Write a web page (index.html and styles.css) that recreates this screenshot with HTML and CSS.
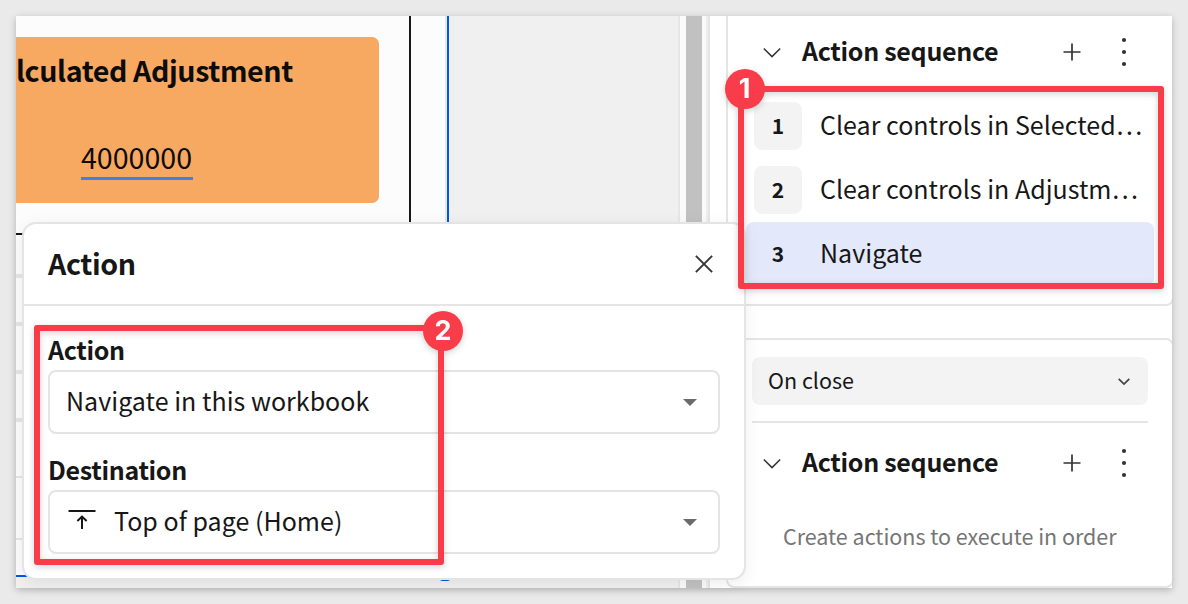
FILE: index.html
```html
<!DOCTYPE html>
<html lang="en">
<head>
<meta charset="utf-8">
<title>Action sequence</title>
<link rel="stylesheet" href="styles.css">
</head>
<body>
<main class="window">
  <section class="canvas">
    <div class="page">
      <div class="page-top">
        <div class="kpi">
          <div class="kpi-title">lculated Adjustment</div>
          <div class="kpi-value"><span class="t-value">4000000</span></div>
        </div>
      </div>
      <div class="rows">
        <i class="row-line"></i><i class="row-line"></i><i class="row-line"></i><i class="row-line"></i>
        <i class="row-line thin first"></i><i class="row-line thin"></i>
      </div>
    </div>
    <div class="gutter"></div>
    <div class="scrollbar"><div class="thumb"></div></div>
    <span class="handle"></span>
  </section>

  <aside class="sidebar">
    <div class="card card-open">
      <header class="seq-head">
        <svg class="chev" viewBox="0 0 20 12"><path d="M1.8 2.5 10 10.6 18.2 2.5"/></svg>
        <h2 class="seq-title">Action sequence</h2>
        <svg class="plus" viewBox="0 0 18 18"><path d="M9 .5v17M.5 9h17"/></svg>
        <svg class="dots" viewBox="0 0 6 30"><circle cx="3" cy="3" r="2.1"/><circle cx="3" cy="15" r="2.1"/><circle cx="3" cy="27" r="2.1"/></svg>
      </header>
      <ol class="steps">
        <li class="step"><b class="num">1</b><span class="step-text">Clear controls in Selected…</span></li>
        <li class="step"><b class="num">2</b><span class="step-text">Clear controls in Adjustm…</span></li>
        <li class="step active"><b class="num">3</b><span class="step-text">Navigate</span></li>
      </ol>
    </div>
    <div class="card card-close">
      <div class="trigger"><span>On close</span><svg class="chev-sm" viewBox="0 0 14 10"><path d="M1.7 2.8 7 8 12.3 2.8"/></svg></div>
      <hr class="rule">
      <header class="seq-head second">
        <svg class="chev" viewBox="0 0 20 12"><path d="M1.8 2.5 10 10.6 18.2 2.5"/></svg>
        <h2 class="seq-title">Action sequence</h2>
        <svg class="plus" viewBox="0 0 18 18"><path d="M9 .5v17M.5 9h17"/></svg>
        <svg class="dots" viewBox="0 0 6 30"><circle cx="3" cy="3" r="2.1"/><circle cx="3" cy="15" r="2.1"/><circle cx="3" cy="27" r="2.1"/></svg>
      </header>
      <p class="empty">Create actions to execute in order</p>
    </div>
  </aside>

  <section class="popover">
    <header class="pop-head">
      <h1 class="pop-title">Action</h1>
      <svg class="close" viewBox="0 0 18 18"><path d="M.9.9l16.2 16.2M17.1.9.9 17.1"/></svg>
    </header>
    <div class="fields">
      <div class="label">Action</div>
      <div class="select"><span class="value">Navigate in this workbook</span><svg class="caret" viewBox="0 0 14 7"><path d="M0 0h14L7 7z"/></svg></div>
      <div class="label">Destination</div>
      <div class="select">
        <svg class="top-icon" viewBox="0 0 28 20"><path d="M.5 2h27M14 7.4V20M9.4 12 14 7.6l4.6 4.4"/></svg>
        <span class="value">Top of page (Home)</span>
        <svg class="caret" viewBox="0 0 14 7"><path d="M0 0h14L7 7z"/></svg>
      </div>
    </div>
  </section>
</main>
<div class="mark mark-1"><span class="badge">1</span></div>
<div class="mark mark-2"><span class="badge">2</span></div>
</body>
</html>
```
FILE: styles.css
```css
* { box-sizing: border-box; }
body {
  margin: 0; padding: 16px; width: 1188px; height: 604px; overflow: hidden;
  position: relative; background: #eaeaea; color: #171717;
  font-family: "Noto Sans CJK SC", "Noto Sans", sans-serif;
}
h1, h2, p, ol { margin: 0; padding: 0; }
svg { display: block; fill: none; flex: none; }
span { white-space: nowrap; }

.window {
  position: relative; display: flex; width: 1156px; height: 572px;
  background: #fff; box-shadow: 0 2px 7px rgba(0,0,0,.24);
}
.canvas { position: relative; display: flex; width: 694px; height: 572px; background: #f0f0f0; }
.page {
  width: 433px; height: 561px; background: #fcfcfc; overflow: hidden;
  border-right: 2px solid #0058e6; border-bottom: 2px solid #0058e6;
  box-shadow: inset -2px 0 #e8e8e8;
}
.page-top {
  width: 395px; height: 219px; padding-top: 21px;
  border-right: 2px solid #171717; border-bottom: 2px solid #171717;
}
.kpi { width: 363px; height: 166px; background: #f7a861; border-radius: 0 7px 7px 0; color: #0c0c0c; }
.kpi-title { height: 66px; font-size: 28.6px; font-weight: 700; line-height: 66px; letter-spacing: -.4px; }
.kpi-value { display: flex; height: 77px; padding-left: 65px; align-items: flex-end; font-size: 28.6px; }
.t-value { width: 112px; height: 46px; line-height: 46px; border-bottom: 3px solid #3e7fe8; }
.rows { display: flex; flex-direction: column; gap: 44px; padding-top: 39px; }
.row-line { height: 4px; background: #e5e5e5; }
.row-line.thin { height: 2px; margin-top: 16px; }
.row-line.first { margin-top: 10px; }
.gutter { flex: 1; }
.scrollbar {
  width: 32px; background: #fafafa; border-left: 2px solid #e6e6e6;
  border-right: 2px solid #e5e5e5; padding-left: 6px;
  box-shadow: inset -2px 0 #eee;
}
.thumb { width: 16px; height: 100%; background: #c1c1c1; }
.handle { position: absolute; left: 423px; top: 553px; width: 12px; height: 12px; border-radius: 4px; background: #0058e6; }

.sidebar { flex: 1; padding-left: 16px; overflow: hidden; }
.card { width: 448px; border: 2px solid #e5e5e5; background: #fff; }
.card-open { height: 290px; border-top: 0; border-radius: 0 0 8px 8px; }
.card-close { height: 250px; margin-top: 32px; border-radius: 8px; padding: 17px 0 0 24px; }
.seq-head { display: flex; align-items: center; height: 72px; padding-left: 34px; color: #171717; }
.seq-title { width: 198px; margin-left: 20px; padding-bottom: 4px; font-size: 25px; line-height: 36px; font-weight: 700; letter-spacing: -.3px; white-space: nowrap; }
.chev { width: 20px; height: 12px; stroke: #333; stroke-width: 1.5; }
.plus { width: 18px; height: 18px; margin-left: 63px; stroke: #333; stroke-width: 1.7; }
.dots { width: 6px; height: 30px; margin-left: 40px; fill: #333; }
.steps { list-style: none; padding: 6px 0 0 18px; }
.step { display: flex; align-items: center; width: 408px; height: 64px; padding-left: 8px; border-radius: 8px; }
.num { display: flex; justify-content: center; align-items: center; width: 48px; height: 48px; margin-right: 18px; padding-bottom: 2px; border-radius: 8px; background: #f3f3f3; font-size: 21px; line-height: 30px; }
.active, .active .num { background: #e3e9fa; }
.step-text { padding-bottom: 4px; font-size: 25px; line-height: 36px; letter-spacing: .02px; }
.trigger { display: flex; align-items: center; justify-content: space-between; width: 396px; height: 48px; padding: 0 17px 0 16px; border-radius: 8px; background: #f3f3f3; font-size: 21.5px; line-height: 30px; }
.trigger span { padding-bottom: 2px; }
.chev-sm { width: 14px; height: 10px; stroke: #444; stroke-width: 1.7; }
.rule { width: 396px; height: 2px; margin: 16px 0 0; border: 0; background: #e5e5e5; }
.second { padding-left: 10px; height: 80px; }
.empty { padding: 17px 0 0 31px; font-size: 21.5px; line-height: 32px; letter-spacing: -.02px; color: #757575; white-space: nowrap; }

.popover {
  position: absolute; left: 6px; top: 206px; width: 724px; height: 358px;
  border: 2px solid #e4e4e4; border-radius: 14px; background: #fff;
  box-shadow: 0 4px 16px rgba(0,0,0,.07);
}
.pop-head { display: flex; align-items: center; justify-content: space-between; height: 82px; padding: 0 31px 0 24px; border-bottom: 2px solid #e5e5e5; }
.pop-title { padding-bottom: 2px; font-size: 28.6px; line-height: 40px; letter-spacing: -.4px; }
.close { width: 18px; height: 18px; stroke: #333; stroke-width: 1.9; }
.fields { padding: 25px 24px 0; }
.label { height: 39px; font-size: 25px; font-weight: 700; line-height: 36px; letter-spacing: -.32px; }
.select { display: flex; align-items: center; width: 672px; height: 64px; margin-bottom: 17px; padding: 0 21px 0 16px; border: 2px solid #e4e4e4; border-radius: 8px; font-size: 25px; line-height: 36px; }
.value { padding-bottom: 4px; letter-spacing: .03px; }
.caret { width: 14px; height: 7px; margin-left: auto; fill: #6b6b6b; }
.top-icon { width: 28px; height: 20px; margin: 0 18px 6px 2px; stroke: #171717; stroke-width: 2; }

.mark { position: absolute; border: 6px solid #f83c4a; border-radius: 3px; filter: drop-shadow(0 2px 3px rgba(0,0,0,.18)); }
.mark-1 { left: 738px; top: 86px; width: 426px; height: 203px; }
.mark-2 { left: 34px; top: 325px; width: 410px; height: 240px; }
.badge {
  position: absolute; display: flex; align-items: center; justify-content: center;
  width: 40px; height: 40px; padding-right: 1px; border-radius: 50%; background: #f83c4a; color: #fff;
  font: 700 27px/40px Inter, sans-serif;
}
.mark-1 .badge { left: -19px; top: -23px; }
.mark-2 .badge { left: 383px; top: -20px; padding-right: 0; }
```
